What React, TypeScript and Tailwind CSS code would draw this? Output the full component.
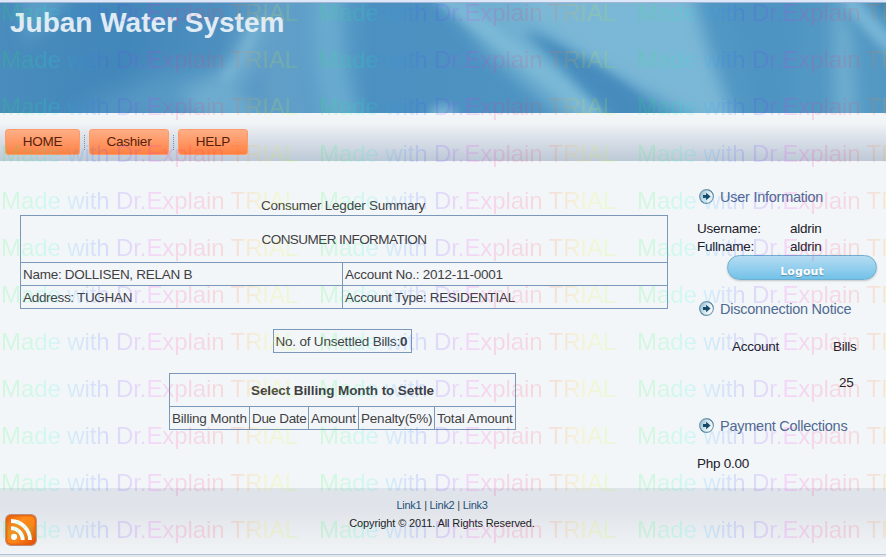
import React from "react";

const watermarkRows = Array.from({ length: 12 }, (_, i) => i);
const watermarkCols = [0, 1, 2];

function Watermark() {
  return (
    <div className="pointer-events-none absolute inset-0 z-10 overflow-hidden" aria-hidden="true">
      {watermarkRows.map((row) => (
        <div key={row} className="flex h-[47px] w-[960px] whitespace-pre text-[24px] leading-[26px]">
          {watermarkCols.map((col) => (
            <div key={col} className="w-[318px] shrink-0 pl-px tracking-[-0.1px]">
              <span className="bg-[linear-gradient(90deg,#10ff40_0%,#10ff70_8%,#10ffe0_17%,#20a0ff_25%,#4040ff_36%,#8030ff_43%,#f020ff_50%,#ff2090_60%,#ff3050_72%,#ff7020_80%,#ffe010_88%,#d8ff10_94%,#a0ff20_100%)] bg-clip-text text-transparent opacity-[0.14]">
                Made with Dr.Explain TRIAL
              </span>
            </div>
          ))}
        </div>
      ))}
    </div>
  );
}

function BannerArt() {
  return (
    <svg className="absolute inset-0 h-full w-full" viewBox="0 3 886 110" preserveAspectRatio="none">
      <defs>
        <linearGradient id="sea" x1="0" x2="1" y1="0" y2="0">
          <stop offset="0" stopColor="#498cbd" />
          <stop offset=".14" stopColor="#4287ba" />
          <stop offset=".25" stopColor="#4d90c0" />
          <stop offset=".31" stopColor="#629fc8" />
          <stop offset=".38" stopColor="#599dc8" />
          <stop offset=".42" stopColor="#4b90c0" />
          <stop offset=".7" stopColor="#5096c4" />
          <stop offset="1" stopColor="#5499c4" />
        </linearGradient>
        <filter id="b4" x="-50%" y="-50%" width="200%" height="200%"><feGaussianBlur stdDeviation="4" /></filter>
        <filter id="b8" x="-50%" y="-50%" width="200%" height="200%"><feGaussianBlur stdDeviation="8" /></filter>
        <filter id="b14" x="-50%" y="-50%" width="200%" height="200%"><feGaussianBlur stdDeviation="13" /></filter>
      </defs>
      <rect y="3" width="886" height="110" fill="url(#sea)" />
      <path d="M20 -10H75L45 30L24 44Z" fill="#6fb0d2" opacity=".5" filter="url(#b8)" />
      <path d="M70 122Q140 65 215 70L250 122Z" fill="#6aaace" opacity=".5" filter="url(#b14)" />
      <path d="M180 92Q226 78 247 25L270 10Q262 65 238 90L265 122H205Z" fill="#7cb7d5" opacity=".6" filter="url(#b8)" />
      <path d="M256 20Q246 56 222 80" stroke="#8ac2da" strokeWidth="9" fill="none" opacity=".4" filter="url(#b4)" />
      <path d="M314 -10H342Q337 60 363 122H327Q308 55 314 -10Z" fill="#73b3d4" opacity=".6" filter="url(#b8)" />
      <path d="M432 -12H575L530 30L555 60L609 122H570L490 55Z" fill="#7dbad6" opacity=".75" filter="url(#b8)" />
      <path d="M440 -5Q487 30 528 61T598 119" stroke="#80bcd9" strokeWidth="15" fill="none" opacity=".75" filter="url(#b4)" />
      <path d="M530 -12H692Q704 45 738 128H712L640 90L586 60L530 26Z" fill="#7eb9d7" opacity=".95" filter="url(#b8)" />
      <path d="M523 32Q566 48 602 70T668 122H618Q578 72 523 32Z" fill="#478bbd" opacity=".95" filter="url(#b4)" />
      <ellipse cx="443" cy="114" rx="14" ry="9" fill="#80bad8" opacity=".8" filter="url(#b4)" />
      <path d="M725 -10H810Q800 30 785 122H758Z" fill="#4c92c1" opacity=".6" filter="url(#b8)" />
      <path d="M834 -10Q833 58 835 122H858L852 35Z" fill="#7bb7d5" opacity=".7" filter="url(#b8)" />
      <path d="M845 -5Q868 25 894 48" stroke="#80bcda" strokeWidth="16" fill="none" opacity=".8" filter="url(#b4)" />
      <path d="M870 -5L895 25V-5Z" fill="#347bad" opacity=".7" filter="url(#b4)" />
    </svg>
  );
}

const menuButton =
  "flex h-[26px] items-center justify-center rounded-[3px] border border-[#ff9a68] bg-gradient-to-b from-[#ffae86] to-[#ff8040] pt-px text-[13.5px] tracking-[-0.25px] text-[#571f0b]";

function Dots() {
  return <div className="mx-[4px] mt-[2px] h-[15px] border-l border-dotted border-[#7c8da4]" />;
}

function ArrowIcon() {
  return (
    <svg className="mr-[6px] mt-[-2px] h-[15px] w-[15px] shrink-0" viewBox="0 0 15 15">
      <defs>
        <linearGradient id="ring" x1="0" x2="1" y1="0" y2="1">
          <stop offset="0" stopColor="#93aebd" />
          <stop offset=".55" stopColor="#3c7592" />
          <stop offset="1" stopColor="#94b0bf" />
        </linearGradient>
        <linearGradient id="disc" x1="0" x2="1" y1="0" y2=".4">
          <stop offset="0" stopColor="#83b4ce" />
          <stop offset=".6" stopColor="#d9e9f0" />
          <stop offset="1" stopColor="#f7fbfc" />
        </linearGradient>
      </defs>
      <circle cx="7.5" cy="7.5" r="6.9" fill="url(#disc)" stroke="url(#ring)" strokeWidth="1.1" />
      <path d="M4 6.1H7.1V3.7L11.6 7.5L7.1 11.2V8.9H4Z" fill="#174a68" />
    </svg>
  );
}

function SideTitle({ children }: { children: React.ReactNode }) {
  return (
    <h2 className="flex h-[18px] items-center pl-[2px] text-[14.5px] leading-[18px] tracking-[-0.25px] text-[#4f6a91]">
      <ArrowIcon />
      <span>{children}</span>
    </h2>
  );
}

function RssIcon() {
  return (
    <svg className="h-[32px] w-[32px]" viewBox="0 0 32 32">
      <defs>
        <linearGradient id="rss" x1="0" x2="1" y1="0" y2="1">
          <stop offset="0" stopColor="#e55a0a" />
          <stop offset=".35" stopColor="#ff8c1c" />
          <stop offset=".6" stopColor="#fb8518" />
          <stop offset="1" stopColor="#dc4405" />
        </linearGradient>
      </defs>
      <rect x=".7" y=".7" width="30.6" height="30.6" rx="5" fill="url(#rss)" stroke="#c08d76" strokeWidth="1.2" />
      <rect x="1.8" y="1.8" width="28.4" height="28.4" rx="4" fill="none" stroke="#e85a08" />
      <circle cx="9" cy="22.8" r="3.1" fill="#fff" />
      <path d="M6 14.2A11.7 11.7 0 0 1 17.8 26M6 7A19 19 0 0 1 25 26" fill="none" stroke="#fff" strokeWidth="3.8" />
    </svg>
  );
}

const cell = "border-b border-r border-[#7b98b8] px-[2px]";

export default function App() {
  return (
    <div className="relative flex h-[557px] w-[886px] flex-col overflow-hidden bg-[#f3f6f8] font-['Liberation_Sans',Arial,sans-serif] text-[13.5px] tracking-[-0.25px]">
      <div className="h-[3px] shrink-0 border-b border-[#9fb4d1] bg-[#dce7fa]" />
      <header className="relative h-[110px] shrink-0 overflow-hidden">
        <BannerArt />
        <h1 className="relative pl-[10px] pt-[4px] text-[28px] font-bold leading-[32px] tracking-normal text-[#e0ecf5]">Juban Water System</h1>
      </header>
      <nav className="flex h-[48px] shrink-0 bg-[linear-gradient(#f3f6f8_0%,#f1f4f7_22%,#dce2ea_50%,#bdc9d7_100%)] pl-[5px] pt-[16px]">
        <a className={`${menuButton} w-[75px]`}>HOME</a>
        <div className="pt-[4px]"><Dots /></div>
        <a className={`${menuButton} w-[80px]`}>Cashier</a>
        <div className="pt-[4px]"><Dots /></div>
        <a className={`${menuButton} w-[70px]`}>HELP</a>
      </nav>

      <div className="flex h-[327px] shrink-0">
        <main className="flex w-[668px] flex-col items-center pl-[20px] pt-[36px] text-[#3f3f43]">
          <p className="h-[18px] w-full pr-[2px] text-center leading-[17px]">Consumer Legder Summary</p>
          <div className="grid h-[94px] w-[648px] shrink-0 grid-cols-[322px_325px] grid-rows-[47px_23px_23px] border-l border-t border-[#7b98b8] leading-[23px]">
            <div className={`${cell} col-span-2 text-center leading-[47px] tracking-[-0.55px]`}>CONSUMER INFORMATION</div>
            <div className={`${cell} tracking-[-0.28px]`}>Name: DOLLISEN, RELAN B</div>
            <div className={cell}>Account No.: 2012-11-0001</div>
            <div className={`${cell} tracking-[-0.31px]`}>Address: TUGHAN</div>
            <div className={`${cell} tracking-[-0.31px]`}>Account Type: RESIDENTIAL</div>
          </div>
          <div className="mr-[4px] mt-[20px] h-[24px] w-[139px] shrink-0 whitespace-nowrap border border-[#7b98b8] pl-[2px] leading-[23px] tracking-[-0.2px]">
            No. of Unsettled Bills:<b>0</b>
          </div>
          <div className="mr-[3px] mt-[20px] grid h-[57px] w-[347px] shrink-0 grid-cols-[80px_59px_50px_76px_81px] grid-rows-[33px_23px] whitespace-nowrap border-l border-t border-[#7b98b8] leading-[23px]">
            <div className={`${cell} col-span-5 text-center font-bold leading-[34px] tracking-[-0.1px]`}>Select Billing Month to Settle</div>
            <div className={`${cell} tracking-[-0.2px]`}>Billing Month</div>
            <div className={`${cell} tracking-[-0.32px]`}>Due Date</div>
            <div className={`${cell} tracking-[-0.32px]`}>Amount</div>
            <div className={`${cell} tracking-[-0.2px]`}>Penalty(5%)</div>
            <div className={`${cell} tracking-[-0.2px]`}>Total Amount</div>
          </div>
        </main>

        <aside className="ml-[29px] w-[189px] pt-[27px] text-[#202028]">
          <SideTitle>User Information</SideTitle>
          <dl className="mt-[14px] grid grid-cols-[93px_1fr] leading-[18px]">
            <dt>Username:</dt>
            <dd>aldrin</dd>
            <dt>Fullname:</dt>
            <dd>aldrin</dd>
          </dl>
          <button className="ml-[30px] mt-[-1px] block h-[25px] w-[150px] rounded-full border border-[#6fafcf] bg-gradient-to-b from-[#b5dcf2] to-[#72c2e9] pt-[7px] font-['DejaVu_Sans',sans-serif] text-[11px] font-bold leading-[18px] tracking-[0.1px] text-white shadow-[0_1px_2px_rgba(0,0,0,0.2)] [text-shadow:0_1px_1px_rgba(40,90,120,0.5)]">
            Logout
          </button>
          <div className="mt-[20px]">
            <SideTitle>Disconnection Notice</SideTitle>
          </div>
          <div className="mt-[20px] grid grid-cols-[101px_1fr] pl-[35px] leading-[18px]">
            <span>Account</span>
            <span>Bills</span>
            <span className="col-start-2 mt-[18px] pl-[6px]">25</span>
          </div>
          <div className="mt-[25px]">
            <SideTitle>Payment Collections</SideTitle>
          </div>
          <p className="mt-[20px] leading-[18px]">Php 0.00</p>
        </aside>
      </div>

      <footer className="flex h-[66px] shrink-0 items-start bg-[linear-gradient(#dfe3ea_0%,#e0e4ea_30%,#f1f4f6_100%)] text-[11px]">
        <div className="w-[40px] pl-[5px] pt-[26px]"><RssIcon /></div>
        <div className="w-[806px] pr-[2px] pt-[8px] text-center leading-[18px] text-[#1c1c24]">
          <p className="text-[#1f4f79] tracking-[-0.27px]">
            <a>Link1</a> <span className="text-[#344]">|</span> <a>Link2</a> <span className="text-[#344]">|</span> <a>Link3</a>
          </p>
          <p className="tracking-[-0.12px]">Copyright © 2011. All Rights Reserved.</p>
        </div>
      </footer>
      <div className="h-[3px] shrink-0 border-t border-[#b1c1d6] bg-[#e0e5e9]" />
      <Watermark />
    </div>
  );
}
